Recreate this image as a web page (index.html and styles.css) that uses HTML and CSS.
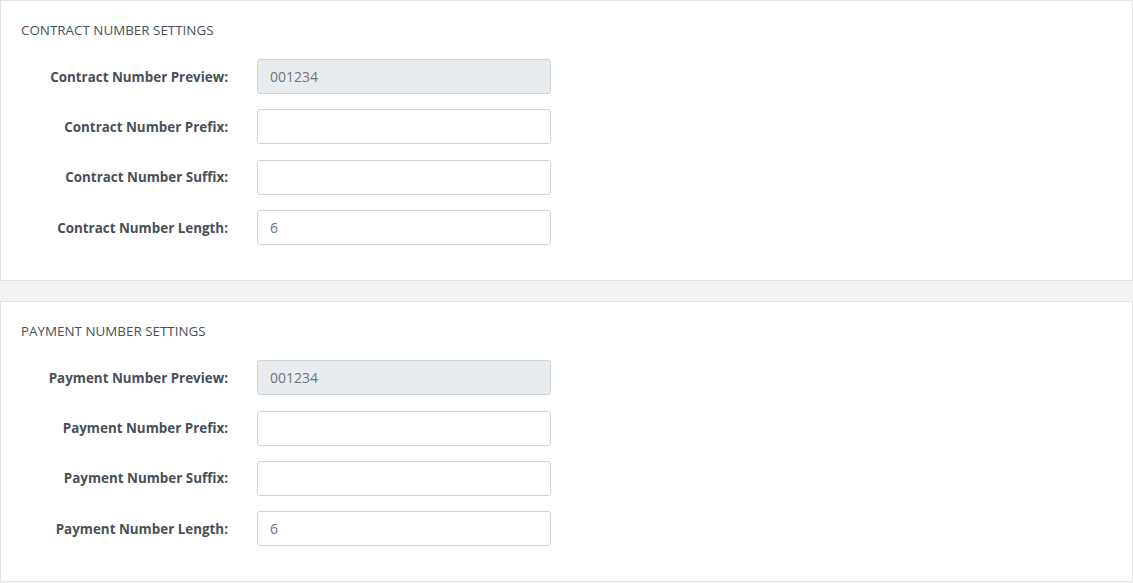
FILE: index.html
```html
<!DOCTYPE html>
<html>
<head>
<meta charset="utf-8">
<link rel="stylesheet" href="styles.css">
</head>
<body>
<div class="page">
  <section class="card">
    <h2 class="card-title">CONTRACT NUMBER SETTINGS</h2>
    <div class="form">
      <label class="label">Contract Number Preview:</label>
      <div class="input readonly">001234</div>
      <label class="label">Contract Number Prefix:</label>
      <div class="input"></div>
      <label class="label">Contract Number Suffix:</label>
      <div class="input"></div>
      <label class="label">Contract Number Length:</label>
      <div class="input">6</div>
    </div>
  </section>
  <section class="card">
    <h2 class="card-title">PAYMENT NUMBER SETTINGS</h2>
    <div class="form">
      <label class="label">Payment Number Preview:</label>
      <div class="input readonly">001234</div>
      <label class="label">Payment Number Prefix:</label>
      <div class="input"></div>
      <label class="label">Payment Number Suffix:</label>
      <div class="input"></div>
      <label class="label">Payment Number Length:</label>
      <div class="input">6</div>
    </div>
  </section>
</div>
</body>
</html>
```

FILE: styles.css
```css
* { box-sizing: border-box; }
html, body { margin: 0; padding: 0; }
body {
  background: #f3f3f3;
  font-family: "Open Sans", "Noto Sans", sans-serif;
  color: #495057;
  width: 1133px;
  height: 583px;
  overflow: hidden;
}
.page {
  display: flex;
  flex-direction: column;
  gap: 20px;
}
.card {
  background: #fff;
  border: 1px solid #e3e3e3;
  padding: 19px 20px 35px 20px;
}
.card-title {
  margin: 0 0 19px 0;
  font-size: 13.4px;
  line-height: 20px;
  font-weight: 400;
  color: #495057;
}
.form {
  display: grid;
  grid-template-columns: 207px 294px;
  grid-auto-rows: 35px;
  column-gap: 29px;
  row-gap: 15.4px;
  align-items: center;
}
.label {
  text-align: right;
  font-weight: 700;
  font-size: 13.4px;
  color: #495057;
}
.input {
  height: 35px;
  border: 1px solid #ced4da;
  border-radius: 3px;
  background: #fff;
  padding: 0 12px;
  font-size: 14px;
  line-height: 33px;
  color: #6c757d;
}
.input.readonly {
  background: #e9ecef;
}
```
